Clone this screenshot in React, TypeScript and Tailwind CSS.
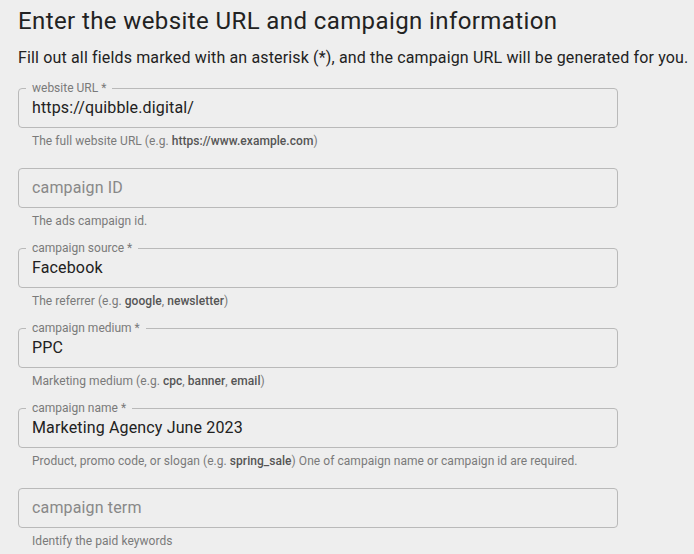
import React from "react";

type Field = {
  label: string;
  required?: boolean;
  value?: string;
  helper: React.ReactNode;
};

const B = ({ children }: { children: React.ReactNode }) => (
  <span className="font-medium text-[#555555]">{children}</span>
);

const fields: Field[] = [
  {
    label: "website URL",
    required: true,
    value: "https://quibble.digital/",
    helper: (
      <>
        The full website URL (e.g. <B>https://www.example.com</B>)
      </>
    ),
  },
  { label: "campaign ID", helper: "The ads campaign id." },
  {
    label: "campaign source",
    required: true,
    value: "Facebook",
    helper: (
      <>
        The referrer (e.g. <B>google</B>, <B>newsletter</B>)
      </>
    ),
  },
  {
    label: "campaign medium",
    required: true,
    value: "PPC",
    helper: (
      <>
        Marketing medium (e.g. <B>cpc</B>, <B>banner</B>, <B>email</B>)
      </>
    ),
  },
  {
    label: "campaign name",
    required: true,
    value: "Marketing Agency June 2023",
    helper: (
      <>
        Product, promo code, or slogan (e.g. <B>spring_sale</B>) One of campaign name or campaign id are
        required.
      </>
    ),
  },
  { label: "campaign term", helper: "Identify the paid keywords" },
];

function OutlinedField({ label, required, value, helper }: Field) {
  const filled = !!value;
  return (
    <div className="mb-[19px]">
      <div className="relative h-[40px] w-[600px] rounded-[4px] border border-[#b9b9b9] px-[13px] flex items-center">
        {filled && (
          <span className="absolute left-[7px] -top-[9px] bg-[#eeeeee] px-[6px] text-[12px] leading-[16px] text-[#7a7a7a]">
            {label} {required && "*"}
          </span>
        )}
        <span
          className={`text-[16px] leading-[24px] tracking-[0.15px] ${filled ? "text-[#212121]" : "text-[#888888]"}`}
        >
          {filled ? value : label}
        </span>
      </div>
      <div className="mt-[5px] pl-[14px] text-[12px] leading-[16px] tracking-[0.05px] text-[#7a7a7a]">{helper}</div>
    </div>
  );
}

export default function App() {
  return (
    <div className="min-h-screen bg-[#eeeeee] pl-[18px] font-['Roboto',sans-serif] overflow-hidden h-[554px]">
      <h1 className="pt-[5px] text-[24px] leading-[32px] font-normal tracking-[0.4px] text-[#222222]">
        Enter the website URL and campaign information
      </h1>
      <p className="mt-[9px] text-[16px] leading-[24px] tracking-[0.15px] text-[#222222]">
        Fill out all fields marked with an asterisk (*), and the campaign URL will be generated for you.
      </p>
      <div className="mt-[18px]">
        {fields.map((f) => (
          <OutlinedField key={f.label} {...f} />
        ))}
      </div>
    </div>
  );
}
